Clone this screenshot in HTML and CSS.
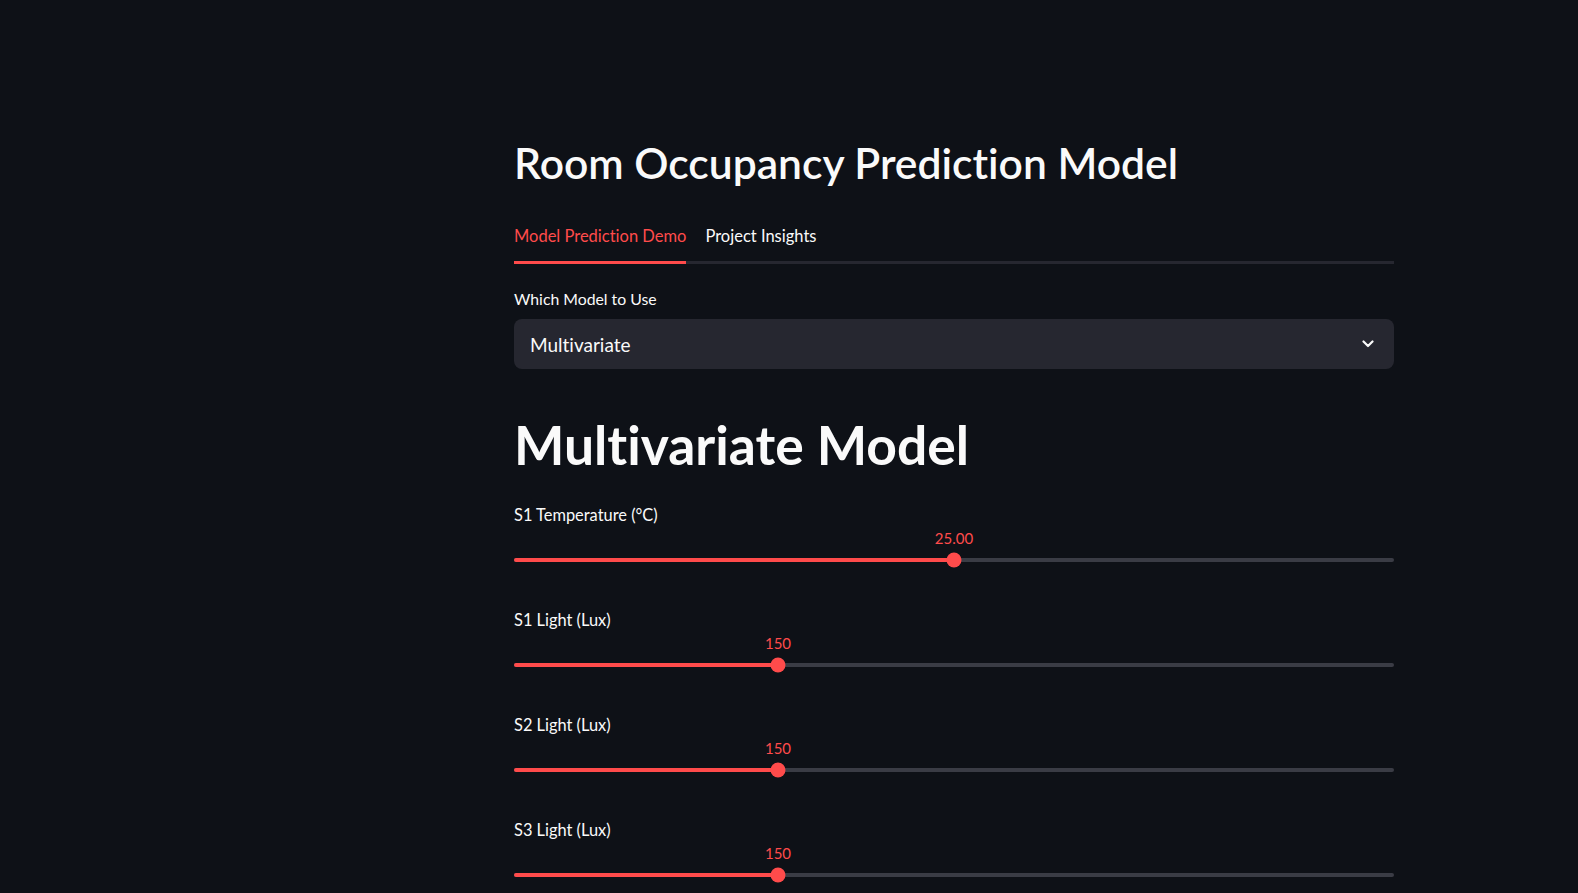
FILE: index.html
```html
<!DOCTYPE html>
<html lang="en">
<head>
<meta charset="utf-8">
<title>Room Occupancy Prediction Model</title>
<link rel="stylesheet" href="styles.css">
</head>
<body>
<div class="app">
  <main class="main">
    <h1 class="title">Room Occupancy Prediction Model</h1>
    <div class="tabs">
      <div class="tab active">Model Prediction Demo</div>
      <div class="tab">Project Insights</div>
    </div>
    <div class="select-field">
      <div class="label">Which Model to Use</div>
      <div class="select">
        <span class="select-value">Multivariate</span>
        <svg class="chevron" width="12" height="8" viewBox="0 0 12 8"><path d="M1.5 1.5 L6 6 L10.5 1.5" fill="none" stroke="#fafafa" stroke-width="2.2" stroke-linecap="round" stroke-linejoin="round"/></svg>
      </div>
    </div>
    <h2 class="subtitle">Multivariate Model</h2>
    <div class="slider-field">
      <div class="label slider-label">S1 Temperature (°C)</div>
      <div class="slider"><div class="track"><div class="fill" style="width:50%"></div><div class="thumb" style="left:50%"><span class="value">25.00</span></div></div></div>
    </div>
    <div class="slider-field">
      <div class="label slider-label">S1 Light (Lux)</div>
      <div class="slider"><div class="track"><div class="fill" style="width:30%"></div><div class="thumb" style="left:30%"><span class="value">150</span></div></div></div>
    </div>
    <div class="slider-field">
      <div class="label slider-label">S2 Light (Lux)</div>
      <div class="slider"><div class="track"><div class="fill" style="width:30%"></div><div class="thumb" style="left:30%"><span class="value">150</span></div></div></div>
    </div>
    <div class="slider-field">
      <div class="label slider-label">S3 Light (Lux)</div>
      <div class="slider"><div class="track"><div class="fill" style="width:30%"></div><div class="thumb" style="left:30%"><span class="value">150</span></div></div></div>
    </div>
  </main>
</div>
</body>
</html>
```
FILE: styles.css
```css
html, body {
  margin: 0;
  padding: 0;
  background: #0e1117;
  color: #fafafa;
  font-family: Lato, "Open Sans", sans-serif;
  font-variant-ligatures: none;
  height: 100%;
  overflow: hidden;
}
.app {
  padding: 136.9px 0 0 514px;
}
.main {
  width: 880px;
}
.title {
  margin: 0;
  font-size: 42.6px;
  line-height: 1.2;
  font-weight: 600;
}
.tabs {
  display: flex;
  gap: 19px;
  margin-top: 36px;
  border-bottom: 3px solid #262730;
}
.tab {
  font-size: 16.5px;
  line-height: 24px;
  padding-bottom: 13px;
  margin-bottom: -3px;
  border-bottom: 3px solid transparent;
}
.tab.active {
  color: #ff4b4b;
  border-bottom-color: #ff4b4b;
}
.label {
  font-size: 15.8px;
  line-height: 20px;
}
.slider-label {
  font-size: 16.4px;
}
.select-field {
  margin-top: 24.8px;
}
.select {
  margin-top: 10.4px;
  height: 50px;
  background: #262730;
  border-radius: 8px;
  display: flex;
  align-items: center;
  justify-content: space-between;
  padding: 0 20px 0 16px;
}
.select-value {
  font-size: 19px;
}
.chevron {
  display: block;
}
.subtitle {
  margin: 43.1px 0 0;
  font-size: 53.4px;
  line-height: 1.2;
  font-weight: 700;
}
.subtitle + .slider-field {
  margin-top: 29.1px;
}
.slider {
  padding: 32.2px 0 48.8px;
}
.track {
  position: relative;
  height: 4px;
  border-radius: 2px;
  background: #3a3c45;
}
.fill {
  height: 100%;
  border-radius: 2px;
  background: #ff4b4b;
}
.thumb {
  position: absolute;
  top: 50%;
  width: 15px;
  height: 15px;
  border-radius: 50%;
  background: #ff4b4b;
  transform: translate(-50%, -50%);
}
.value {
  position: absolute;
  left: 50%;
  bottom: 100%;
  margin-bottom: 4.3px;
  transform: translateX(-50%);
  font-size: 15px;
  line-height: 20px;
  color: #ff4b4b;
  white-space: nowrap;
}
```
